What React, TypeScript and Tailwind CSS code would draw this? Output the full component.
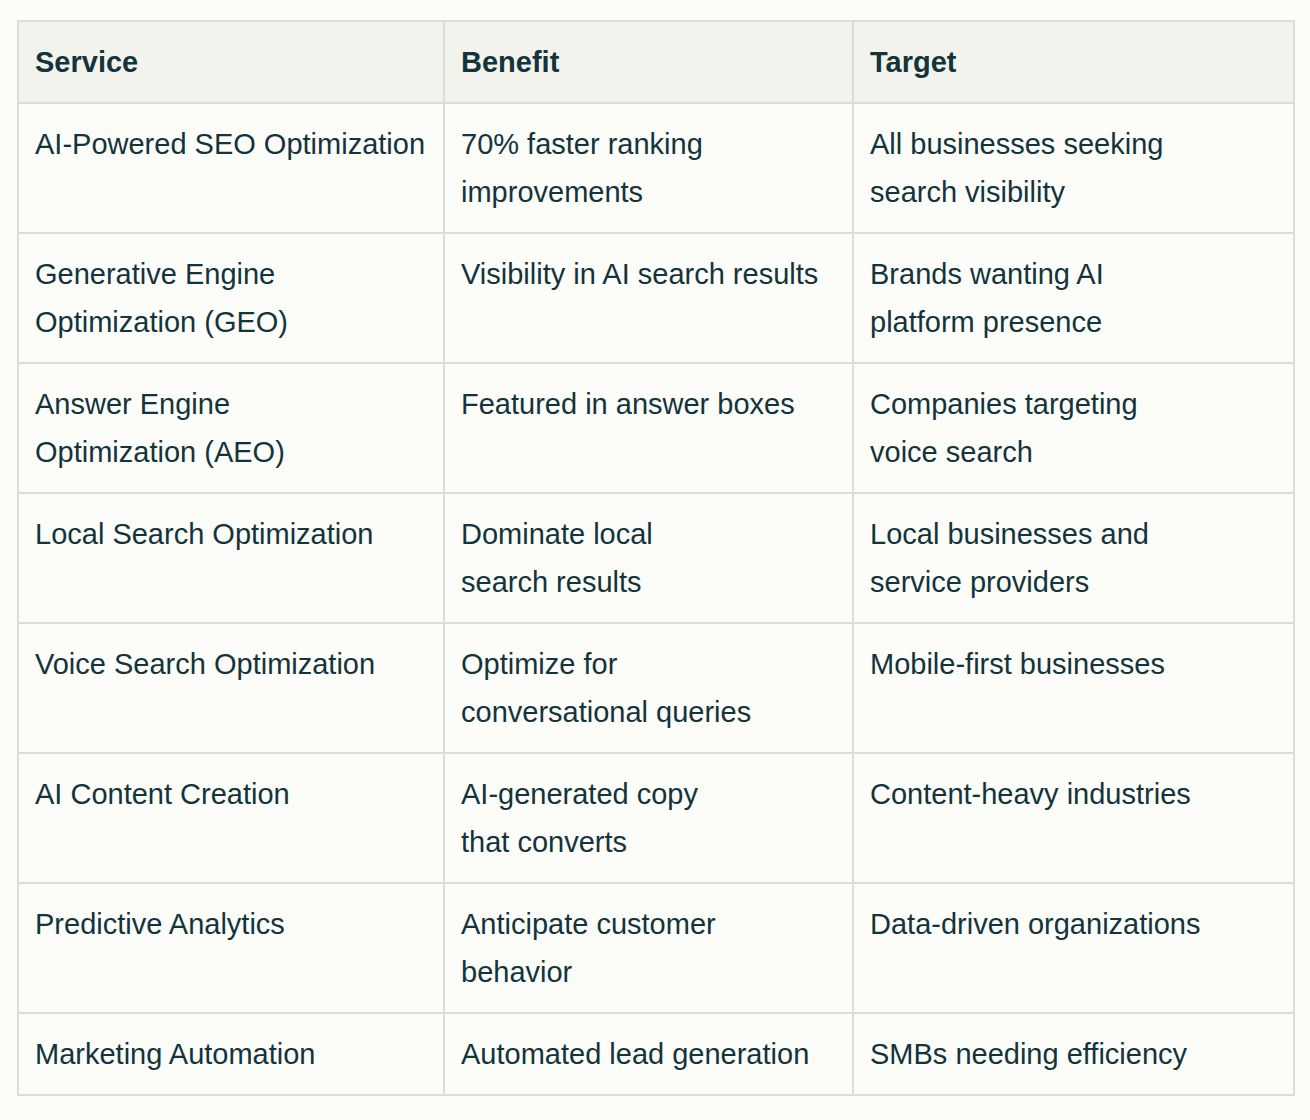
const rows: [string[], string[], string[]][] = [
  [["AI-Powered SEO Optimization"], ["70% faster ranking", "improvements"], ["All businesses seeking", "search visibility"]],
  [["Generative Engine", "Optimization (GEO)"], ["Visibility in AI search results"], ["Brands wanting AI", "platform presence"]],
  [["Answer Engine", "Optimization (AEO)"], ["Featured in answer boxes"], ["Companies targeting", "voice search"]],
  [["Local Search Optimization"], ["Dominate local", "search results"], ["Local businesses and", "service providers"]],
  [["Voice Search Optimization"], ["Optimize for", "conversational queries"], ["Mobile-first businesses"]],
  [["AI Content Creation"], ["AI-generated copy", "that converts"], ["Content-heavy industries"]],
  [["Predictive Analytics"], ["Anticipate customer", "behavior"], ["Data-driven organizations"]],
  [["Marketing Automation"], ["Automated lead generation"], ["SMBs needing efficiency"]],
];

function Lines({ lines }: { lines: string[] }) {
  return (
    <>
      {lines.map((l) => (
        <div key={l} className="whitespace-nowrap">
          {l}
        </div>
      ))}
    </>
  );
}

export default function App() {
  return (
    <main className="min-h-screen w-full bg-[#fcfcf9] pt-[20px] pl-[17px] font-['Liberation_Sans',Arial,sans-serif] text-[#13343b]">
      <table className="table-fixed border-collapse w-[1276px] text-[29px] leading-[48px]">
        <colgroup>
          <col className="w-[426px]" />
          <col className="w-[409px]" />
          <col className="w-[441px]" />
        </colgroup>
        <thead>
          <tr className="bg-[#f3f3ee]">
            {["Service", "Benefit", "Target"].map((h) => (
              <th
                key={h}
                className="border-2 border-[#dcdcd5] h-[82px] px-[16px] text-left align-middle font-bold"
              >
                {h}
              </th>
            ))}
          </tr>
        </thead>
        <tbody>
          {rows.map((r, i) => (
            <tr key={i}>
              {r.map((c, j) => (
                <td
                  key={j}
                  className={`border-2 border-[#dcdcd5] px-[16px] pt-[16px] align-top ${i === rows.length - 1 ? "h-[82px]" : "h-[130px]"}`}
                >
                  <Lines lines={c} />
                </td>
              ))}
            </tr>
          ))}
        </tbody>
      </table>
    </main>
  );
}
